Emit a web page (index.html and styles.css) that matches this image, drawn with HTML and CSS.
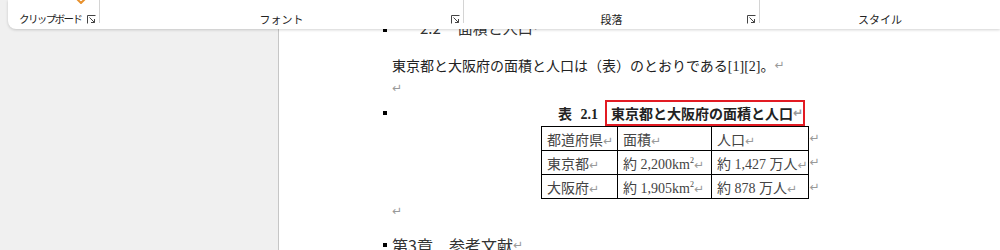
FILE: index.html
```html
<!DOCTYPE html>
<html lang="ja">
<head>
    <meta charset="UTF-8">
    <title>文書 - 面積と人口</title>
    <link rel="stylesheet" href="styles.css">
</head>
<body>
    <div class="ribbon">
        <div class="group clipboard">
            <svg class="paste" width="10" height="5" viewBox="0 0 10 5"><path d="M1 0 L5 4 L9 0" fill="none" stroke="#e8912d" stroke-width="2"/></svg>
            <span class="label">クリップボード</span>
            <svg class="launcher" width="9" height="9" viewBox="0 0 9 9"><path d="M0.5 8.5 V0.5 H8.5" fill="none" stroke="#444"/><path d="M2.5 2.5 L7.5 7.5 M4 7.5 H7.5 V4" fill="none" stroke="#444"/></svg>
        </div>
        <div class="group font">
            <span class="label">フォント</span>
            <svg class="launcher" width="9" height="9" viewBox="0 0 9 9"><path d="M0.5 8.5 V0.5 H8.5" fill="none" stroke="#444"/><path d="M2.5 2.5 L7.5 7.5 M4 7.5 H7.5 V4" fill="none" stroke="#444"/></svg>
        </div>
        <div class="group para">
            <span class="label">段落</span>
            <svg class="launcher" width="9" height="9" viewBox="0 0 9 9"><path d="M0.5 8.5 V0.5 H8.5" fill="none" stroke="#444"/><path d="M2.5 2.5 L7.5 7.5 M4 7.5 H7.5 V4" fill="none" stroke="#444"/></svg>
        </div>
        <div class="group style">
            <span class="label">スタイル</span>
        </div>
    </div>

    <div class="workspace">
        <div class="nav"></div>
        <div class="page">
            <div class="line heading sub">
                <span class="bullet"></span>
                <span class="num">2.2</span><span>面積と人口</span><span class="ret">↵</span>
            </div>
            <div class="line body-text">
                <span>東京都と大阪府の面積と人口は（表）のとおりである[1][2]。</span><span class="ret">↵</span>
            </div>
            <div class="line body-text"><span class="ret">↵</span></div>
            <div class="line caption">
                <span class="bullet"></span>
                <span class="cap-no">表 2.1</span>
                <span class="cap-title">東京都と大阪府の面積と人口<span class="ret">↵</span></span>
            </div>
            <div class="table-wrap">
                <table class="data">
                    <tr><td class="c1">都道府県<span class="ret">↵</span></td><td class="c2">面積<span class="ret">↵</span></td><td class="c3">人口<span class="ret">↵</span></td></tr>
                    <tr><td>東京都<span class="ret">↵</span></td><td>約 2,200km<sup>2</sup><span class="ret">↵</span></td><td>約 1,427 万人<span class="ret">↵</span></td></tr>
                    <tr><td>大阪府<span class="ret">↵</span></td><td>約 1,905km<sup>2</sup><span class="ret">↵</span></td><td>約 878 万人<span class="ret">↵</span></td></tr>
                </table>
                <div class="row-marks">
                    <span class="ret">↵</span><span class="ret">↵</span><span class="ret">↵</span>
                </div>
            </div>
            <div class="line body-text"><span class="ret">↵</span></div>
            <div class="line heading chapter">
                <span class="bullet"></span>
                <span>第3章　参考文献</span><span class="ret">↵</span>
            </div>
        </div>
    </div>
</body>
</html>
```

FILE: styles.css
```css
body {
    margin: 0;
    padding: 0;
    height: 250px;
    overflow: hidden;
    font-family: 'Liberation Serif', 'Noto Sans CJK JP', serif;
    color: #222;
    background: #fff;
    position: relative;
}

/* ribbon lies over the document */
.ribbon {
    position: absolute;
    top: 0;
    left: 8px;
    right: 0;
    height: 29px;
    display: flex;
    background: #fff;
    border-bottom-left-radius: 8px;
    box-shadow: 0 1px 3px rgba(0, 0, 0, 0.18);
    z-index: 2;
    font-family: 'Noto Sans CJK JP', 'Noto Sans', sans-serif;
    font-size: 11px;
    color: #222;
}

.group {
    position: relative;
    height: 23px;
    display: flex;
    align-items: flex-end;
    justify-content: center;
    border-right: 1px solid #d4d4d4;
}

.group .label {
    line-height: 14px;
    margin-bottom: -3px;
}

.clipboard {
    width: 80px;
    justify-content: flex-start;
    padding-left: 11px;
}

.clipboard .label {
    font-size: 10.5px;
    letter-spacing: -1.6px;
}

.font {
    width: 363px;
}

.para {
    width: 295px;
}

.style {
    flex: 1;
    border-right: none;
}

.launcher {
    position: absolute;
    right: 3px;
    bottom: -1px;
}

.paste {
    position: absolute;
    left: 68px;
    top: -1px;
}

.workspace {
    display: flex;
    height: 250px;
}

.nav {
    width: 278px;
    background: #f0f0f0;
    border-right: 1px solid #c6c6c6;
}

.page {
    flex: 1;
    background: #fff;
    padding-top: 16px;
    padding-left: 113px;
}

.line {
    display: flex;
    align-items: center;
    height: 22px;
    position: relative;
    white-space: nowrap;
}

.bullet {
    position: absolute;
    left: -9px;
    top: 50%;
    width: 4px;
    height: 4px;
    margin-top: -2px;
    background: #000;
}

.heading {
    font-family: 'Noto Sans CJK JP', sans-serif;
    font-size: 15px;
    color: #333;
}

.sub .bullet {
    margin-top: 1px;
}

.sub .num {
    margin-left: 28px;
    margin-right: 17px;
}

.body-text {
    font-size: 14px;
}

.body-text + .body-text {
    margin-top: 1px;
}

.sub + .body-text {
    margin-top: 16px;
}

.ret {
    font-family: 'DejaVu Sans', sans-serif;
    font-size: 12px;
    color: #999;
}

.caption {
    height: 26px;
    margin-top: 1px;
    font-weight: bold;
    font-size: 14px;
}

.cap-no {
    margin-left: 166px;
    margin-right: 7px;
    word-spacing: 5px;
}

.cap-title {
    border: 2px solid #e21b23;
    padding: 1px 0 1px 4px;
    height: 20px;
    display: flex;
    align-items: center;
}

.table-wrap {
    display: flex;
    margin-left: 149px;
}

.data {
    border-collapse: collapse;
    font-size: 14px;
    color: #444;
}

.data td {
    border: 1px solid #000;
    height: 23px;
    padding: 0 0 0 5px;
    white-space: nowrap;
    vertical-align: middle;
}

.data .c1 {
    width: 70px;
}

.data .c2 {
    width: 88px;
}

.data .c3 {
    width: 90px;
}

.data sup {
    font-size: 8px;
    vertical-align: 6px;
    line-height: 0;
}

.row-marks {
    display: flex;
    flex-direction: column;
    justify-content: space-around;
    padding-left: 1px;
}

.table-wrap + .body-text {
    margin-top: 1px;
}

.chapter {
    margin-top: 12px;
    font-size: 16px;
}
```
